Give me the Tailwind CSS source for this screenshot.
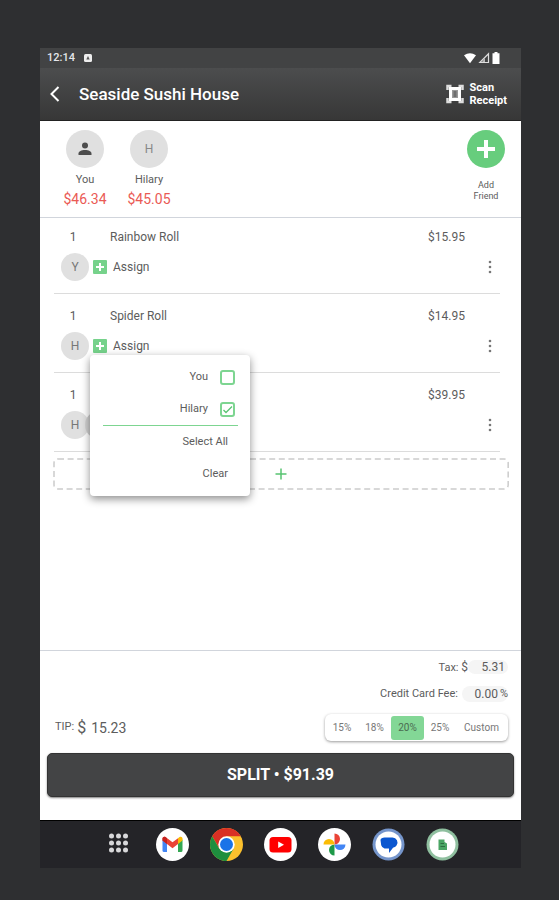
<!DOCTYPE html>
<html lang="en">
<head>
  <meta charset="UTF-8" />
  <meta name="viewport" content="width=device-width, initial-scale=1.0"/>
  <title>Seaside Sushi House</title>
  <script src="https://cdn.jsdelivr.net/npm/@tailwindcss/browser@4"></script>
</head>
<body class="bg-[#2e2f31] min-h-screen flex flex-col pt-12 pb-8 pl-10 pr-[38px] font-[Roboto,sans-serif] text-xs text-[#5c5c5c]">

  <!-- Status bar -->
  <div class="h-5 shrink-0 bg-[#424344] text-white flex items-center justify-between pl-[7px] pr-[21px]">
    <div class="flex items-center gap-2">
      <span class="text-[11px] font-medium text-gray-200">12:14</span>
      <svg class="w-2.5 h-2.5" viewBox="0 0 10 10"><rect x="1" y="1" width="8" height="8" rx="1.5" fill="#eee"/><path d="M5 3l1.7 3.6H3.3z" fill="#555"/></svg>
    </div>
    <div class="flex items-center gap-[2px]">
      <svg class="w-3 h-3" viewBox="0 0 12 12"><path d="M0 3.2Q6-.8 12 3.2L6 11.2z" fill="#fff"/></svg>
      <svg class="w-3 h-3" viewBox="0 0 12 12"><path d="M10.5 1.8v8.7H1.8z" fill="none" stroke="#ddd" stroke-width="1.2"/><path d="M7 6v4H4z" fill="#bbb"/></svg>
      <svg class="w-2 h-3" viewBox="0 0 8 12"><path d="M2.5 0h3v1.2h2V12h-7V1.2h2z" fill="#fff"/></svg>
    </div>
  </div>

  <!-- Header -->
  <header class="h-[53px] shrink-0 bg-linear-to-b from-[#4c4d4e] to-[#373737] border-b border-[#222] text-white flex items-center pl-2 pr-[14px]">
    <button class="w-4 h-5" aria-label="Back">
      <svg class="w-4 h-5" viewBox="0 0 16 20"><path d="M10.5 3l-7 7 7 7" fill="none" stroke="#fff" stroke-width="2"/></svg>
    </button>
    <h1 class="ml-[15px] text-[17px] font-medium">Seaside Sushi House</h1>
    <button class="ml-auto flex items-center gap-[6px] text-left text-[11px] leading-[13px] font-bold">
      <svg class="w-[18px] h-5" viewBox="0 0 18 20">
        <path d="M1.500 6V2h4M12.500 2h4v4M16.500 14v4h-4M5.500 18h-4v-4" fill="none" stroke="#ddd" stroke-width="2.500"/>
        <rect x="4.500" y="4.500" width="9" height="11" fill="#999" stroke="#fff" stroke-width="3"/>
        <path d="M7.500 8h3M7.500 10h3M7.500 12h3" stroke="#444"/>
      </svg>
      <span>Scan<br>Receipt</span>
    </button>
  </header>

  <main class="flex-1 flex flex-col bg-white">

    <!-- People -->
    <section class="flex justify-between pt-[9px] pb-[7px] pl-[13px] pr-4 border-b border-gray-300">
      <div class="flex text-center">
        <div class="w-16">
          <div class="w-[38px] h-[38px] mx-auto rounded-full bg-[#e0e0e0] flex items-center justify-center">
            <svg class="w-[14px] h-[14px]" viewBox="0 0 14 14" fill="#4d4d4d"><circle cx="7" cy="3.5" r="3"/><path d="M.5 13v-1.5C.5 9.3 3.5 8 7 8s6.5 1.3 6.5 3.5V13z"/></svg>
          </div>
          <p class="mt-[3px] text-[11px] leading-[18px]">You</p>
          <p class="text-sm leading-[21px] text-[#ea5a55]">$46.34</p>
        </div>
        <div class="w-16">
          <div class="w-[38px] h-[38px] mx-auto rounded-full bg-[#e0e0e0] text-[#888] flex items-center justify-center">H</div>
          <p class="mt-[3px] text-[11px] leading-[18px]">Hilary</p>
          <p class="text-sm leading-[21px] text-[#ea5a55]">$45.05</p>
        </div>
      </div>
      <button class="flex flex-col items-center text-[9px] leading-[11px]">
        <span class="w-[38px] h-[38px] rounded-full bg-[#67cd7d] flex items-center justify-center">
          <svg class="w-5 h-5" viewBox="0 0 20 20"><path d="M10 1v18M1 10h18" stroke="#fff" stroke-width="4"/></svg>
        </span>
        <span class="mt-3">Add<br>Friend</span>
      </button>
    </section>

    <!-- Items -->
    <section class="flex flex-col gap-3 pt-[9px] pl-[14px] pr-[21px]">
      <div class="pb-3 border-b border-[#dcdcdc]">
        <div class="flex leading-5 pr-[35px]">
          <span class="w-[38px] text-center">1</span>
          <span class="ml-[18px]">Rainbow Roll</span>
          <span class="ml-auto">$15.95</span>
        </div>
        <div class="mt-[6px] flex items-center pl-[7px] pr-1">
          <span class="w-7 h-7 rounded-full bg-[#e0e0e0] text-[#777] flex items-center justify-center">Y</span>
          <button class="ml-1 flex items-center gap-[6px]">
            <svg class="w-[14px] h-[14px]" viewBox="0 0 14 14"><rect width="14" height="14" rx="1" fill="#76d28b"/><path d="M7 3v8M3 7h8" stroke="#fff" stroke-width="2"/></svg>
            Assign
          </button>
          <button class="ml-auto" aria-label="More">
            <svg class="w-3 h-[14px]" viewBox="0 0 12 14" fill="#777"><circle cx="6" cy="2" r="1.3"/><circle cx="6" cy="7" r="1.3"/><circle cx="6" cy="12" r="1.3"/></svg>
          </button>
        </div>
      </div>

      <div class="relative pb-3 border-b border-[#dcdcdc]">
        <div class="flex leading-5 pr-[35px]">
          <span class="w-[38px] text-center">1</span>
          <span class="ml-[18px]">Spider Roll</span>
          <span class="ml-auto">$14.95</span>
        </div>
        <div class="mt-[6px] flex items-center pl-[7px] pr-1">
          <span class="w-7 h-7 rounded-full bg-[#e0e0e0] text-[#777] flex items-center justify-center">H</span>
          <button class="ml-1 flex items-center gap-[6px]">
            <svg class="w-[14px] h-[14px]" viewBox="0 0 14 14"><rect width="14" height="14" rx="1" fill="#76d28b"/><path d="M7 3v8M3 7h8" stroke="#fff" stroke-width="2"/></svg>
            Assign
          </button>
          <button class="ml-auto" aria-label="More">
            <svg class="w-3 h-[14px]" viewBox="0 0 12 14" fill="#777"><circle cx="6" cy="2" r="1.3"/><circle cx="6" cy="7" r="1.3"/><circle cx="6" cy="12" r="1.3"/></svg>
          </button>
        </div>

        <!-- Assign menu -->
        <div class="absolute z-10 left-9 top-[49px] w-40 py-[6px] pl-[13px] pr-3 bg-white rounded-sm text-[11px] shadow-[0_3px_8px_rgba(0,0,0,0.45)]">
          <label class="h-8 pr-[3px] flex items-center justify-end gap-3">
            You
            <input type="checkbox" class="appearance-none w-[15px] h-[15px] border-2 border-[#7dd591] rounded-[3px]">
          </label>
          <label class="h-8 pr-[3px] flex items-center justify-end gap-3">
            Hilary
            <span class="grid">
              <input type="checkbox" checked class="col-start-1 row-start-1 appearance-none w-[15px] h-[15px] border-2 border-[#7dd591] rounded-[3px]">
              <svg class="col-start-1 row-start-1 w-[15px] h-[15px] pointer-events-none" viewBox="0 0 15 15"><path d="M3.500 8l2.500 2.500 6-6" fill="none" stroke="#58c471" stroke-width="1.300"/></svg>
            </span>
          </label>
          <div class="h-px bg-[#7dd591]"></div>
          <button class="block w-full h-8 pr-[10px] text-right">Select All</button>
          <button class="block w-full h-8 pr-[10px] text-right">Clear</button>
        </div>
      </div>

      <div class="pb-3 border-b border-[#dcdcdc]">
        <div class="flex leading-5 pr-[35px]">
          <span class="w-[38px] text-center">1</span>
          <span class="ml-auto">$39.95</span>
        </div>
        <div class="mt-[6px] flex items-center pl-[7px] pr-1">
          <span class="w-7 h-7 rounded-full bg-[#e0e0e0] text-[#777] flex items-center justify-center">H</span>
          <span class="-ml-1 w-7 h-7 rounded-full bg-[#d0d0d0]"></span>
          <button class="ml-auto" aria-label="More">
            <svg class="w-3 h-[14px]" viewBox="0 0 12 14" fill="#777"><circle cx="6" cy="2" r="1.3"/><circle cx="6" cy="7" r="1.3"/><circle cx="6" cy="12" r="1.3"/></svg>
          </button>
        </div>
      </div>
    </section>

    <button class="mt-[6px] ml-[13px] mr-3" aria-label="Add item">
      <svg class="w-full h-8">
        <rect x="1" y="1" width="99.600%" height="30" rx="4" fill="none" stroke="#ccc" stroke-width="1.500" stroke-dasharray="6 3.600"/>
        <svg x="50%" y="16" overflow="visible"><path d="M0-5.500v11M-5.500 0h11" stroke="#58c471" stroke-width="1.500"/></svg>
      </svg>
    </button>

    <!-- Totals -->
    <section class="mt-auto pt-[3px] pb-[23px] border-t border-gray-300">
      <div class="pl-[15px] pr-[13px]">
        <div class="h-[26px] flex items-center justify-end text-[11px]">
          <label for="tax">Tax: <span class="text-xs">$</span></label>
          <input id="tax" value="5.31" class="w-10 h-[14px] pr-[3px] rounded-full bg-[#f5f5f5] text-right text-xs">
        </div>
        <div class="h-7 flex items-center justify-end text-[11px]">
          <label for="fee">Credit Card Fee:</label>
          <span class="ml-1 flex items-center h-4 gap-[2px] rounded-full bg-[#f5f5f5]">
            <input id="fee" value="0.00" class="w-9 text-right text-xs">%
          </span>
        </div>
        <div class="mt-[6px] flex items-center justify-between">
          <div class="flex items-center gap-[3px]">
            <label for="tip" class="text-[11px]">TIP:</label>
            <span class="text-base">$</span>
            <input id="tip" value="15.23" class="w-12 ml-[2px] text-sm">
          </div>
          <div class="flex items-center h-[27px] px-px rounded-md bg-white text-[10px] text-[#777] shadow-[0_1px_3px_rgba(0,0,0,0.4)]">
            <button class="w-8 h-6">15%</button>
            <button class="w-[33px] h-6">18%</button>
            <button class="w-[33px] h-6 rounded-[3px] bg-[#83d796] text-[#4a6b51]">20%</button>
            <button class="w-8 h-6">25%</button>
            <button class="w-[51px] h-6">Custom</button>
          </div>
        </div>
      </div>
      <div class="mt-3 px-[7px]">
        <button class="w-full h-11 rounded-[5px] bg-[#434445] border border-[#333] text-white text-base font-bold shadow-[0_1px_2px_rgba(0,0,0,0.5)]">SPLIT • $91.39</button>
      </div>
    </section>
  </main>

  <!-- Taskbar -->
  <nav class="h-12 shrink-0 bg-[#242428] border-t border-black flex items-center justify-center gap-[21px]">
    <a href="#" aria-label="Apps">
      <svg class="w-[33px] h-[33px]" viewBox="0 0 33 33" fill="#d8d8da">
        <circle cx="9.500" cy="8" r="2.500"/><circle cx="16.500" cy="8" r="2.500"/><circle cx="23.500" cy="8" r="2.500"/>
        <circle cx="9.500" cy="15" r="2.500"/><circle cx="16.500" cy="15" r="2.500"/><circle cx="23.500" cy="15" r="2.500"/>
        <circle cx="9.500" cy="22" r="2.500"/><circle cx="16.500" cy="22" r="2.500"/><circle cx="23.500" cy="22" r="2.500"/>
      </svg>
    </a>
    <a href="#" aria-label="Gmail">
      <svg class="w-[33px] h-[33px]" viewBox="0 0 33 33">
        <circle cx="16.500" cy="16.500" r="16.500" fill="#fff"/>
        <path d="M6.500 11.500l4.500 3.500v9H8a1.500 1.500 0 0 1-1.500-1.500z" fill="#4285f4"/>
        <path d="M26.500 11.500L22 15v9h3a1.500 1.500 0 0 0 1.500-1.500z" fill="#34a853"/>
        <path d="M22 10.300l1.500-1.200c1.300-1 3-.2 3 1.500v1.900L22 16z" fill="#fbbc04"/>
        <path d="M6.500 12.500v-1.900c0-1.700 1.700-2.500 3-1.500l7 5.200 5.500-4.100V16l-5.500 4.200L11 16z" fill="#ea4335"/>
        <path d="M6.500 12.500v-1.900c0-1.700 1.700-2.500 3-1.500L11 10.300V16z" fill="#c5221f"/>
      </svg>
    </a>
    <a href="#" aria-label="Chrome">
      <svg class="w-[33px] h-[33px]" viewBox="0 0 33 33">
        <circle cx="16.500" cy="16.500" r="16.500" fill="#fbc02d"/>
        <path d="M2.200 8.300A16.500 16.500 0 0 1 30.800 8.300H16.500v8.200l-7.100 4.100z" fill="#d93025"/>
        <path d="M2.200 8.300A16.500 16.500 0 0 0 16.500 33l7-12.300H9.400z" fill="#1e8e3e"/>
        <circle cx="16.500" cy="16.500" r="8.200" fill="#fff"/>
        <circle cx="16.500" cy="16.500" r="6.500" fill="#1a73e8"/>
      </svg>
    </a>
    <a href="#" aria-label="YouTube">
      <svg class="w-[33px] h-[33px]" viewBox="0 0 33 33">
        <circle cx="16.500" cy="16.500" r="16.500" fill="#fff"/>
        <rect x="5.500" y="9" width="22" height="15.500" rx="3.500" fill="#f00"/>
        <path d="M14.200 13.500v6.500l5.800-3.250z" fill="#fff"/>
      </svg>
    </a>
    <a href="#" aria-label="Photos">
      <svg class="w-[33px] h-[33px]" viewBox="0 0 33 33">
        <circle cx="16.500" cy="16.500" r="16.500" fill="#fff"/>
        <path d="M16.500 16.500V5.500a5.500 5.500 0 0 1 0 11z" fill="#ea4335"/>
        <path d="M16.500 16.500h11a5.500 5.500 0 0 1-11 0z" fill="#4285f4"/>
        <path d="M16.500 16.500v11a5.500 5.500 0 0 1 0-11z" fill="#1e9a48"/>
        <path d="M16.500 16.500h-11a5.500 5.500 0 0 1 11 0z" fill="#fbbc04"/>
      </svg>
    </a>
    <a href="#" aria-label="Messages">
      <svg class="w-[33px] h-[33px]" viewBox="0 0 33 33">
        <circle cx="16.500" cy="16.500" r="16" fill="#7595cb"/>
        <circle cx="16.500" cy="16.500" r="13" fill="#fff"/>
        <path d="M12.500 9.500h8a5 5 0 0 1 4 8c-.8 1.200-2 1.800-3.500 2.200L17 25v-4.500h-4.500a4.500 4.500 0 0 1-3.300-3.200L8.500 12c0-1.500 2-2.500 4-2.500z" fill="#0b57d0"/>
      </svg>
    </a>
    <a href="#" aria-label="Bill splitter">
      <svg class="w-[33px] h-[33px]" viewBox="0 0 33 33">
        <circle cx="16.500" cy="16.500" r="16" fill="#8fbf9f"/>
        <circle cx="16.500" cy="16.500" r="13" fill="#fff"/>
        <path d="M12.500 11.500h6v2.500l2.500 1.500V22h-8.500z" fill="#4aa564"/>
        <path d="M14.500 15.500h3.500M14.500 18.500h4.500" stroke="#2c6e40"/>
      </svg>
    </a>
  </nav>

</body>
</html>
